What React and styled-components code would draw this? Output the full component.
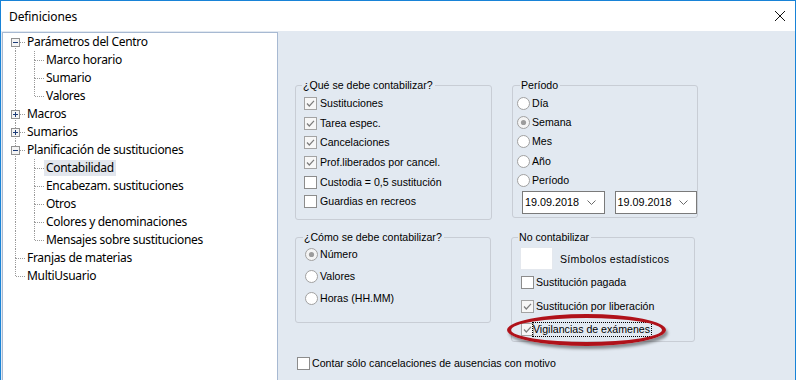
import React from 'react';
import styled, { createGlobalStyle } from 'styled-components';

const GlobalStyle = createGlobalStyle`
  html, body {
    margin: 0;
    padding: 0;
    overflow: hidden;
    background: #ffffff;
  }
`;

const PANEL_BG = '#e2e9f1';

const Window = styled.div`
  height: 380px;
  display: flex;
  flex-direction: column;
  border: 1px solid #1883d7;
  border-bottom: none;
  box-sizing: border-box;
  overflow: hidden;
  font-family: "Noto Sans", "Open Sans", sans-serif;
  color: #000;
`;

const TitleBar = styled.div`
  height: 30px;
  flex: none;
  display: flex;
  align-items: center;
  justify-content: space-between;
  padding: 0 9px 0 8px;
  background: #ffffff;
  font-size: 12px;
  letter-spacing: -0.1px;
`;

const CloseIcon = styled.svg`
  display: block;
  width: 12px;
  height: 12px;
`;

const Body = styled.div`
  flex: 1;
  display: flex;
  background: ${PANEL_BG};
  padding: 1px 0 0 1px;
  min-height: 0;
`;

const TreePanel = styled.div`
  width: 276px;
  flex: none;
  box-sizing: border-box;
  background: #ffffff;
  border: 1px solid #a7b9d2;
  border-bottom: none;
  padding: 0 0 0 3px;
`;

const TreeRow = styled.div`
  display: flex;
  align-items: center;
  height: 18px;
  font-size: 12px;
  letter-spacing: -0.3px;
  white-space: nowrap;
`;

const TreeLabel = styled.span`
  margin-left: ${(p) => (p.$selected ? 0 : 2)}px;
  padding: 0 ${(p) => (p.$selected ? 2 : 0)}px;
  line-height: 16px;
  background: ${(p) => (p.$selected ? '#e2e6ed' : 'transparent')};
`;

const Cell = styled.svg`
  display: block;
  width: 19px;
  height: 18px;
  flex: none;
`;

const RightPanel = styled.div`
  flex: 1;
  display: flex;
  flex-direction: column;
  padding: 53px 0 0 17px;
  font-family: "Liberation Sans", Arial, sans-serif;
  font-size: 10.6px;
`;

const GroupGrid = styled.div`
  display: grid;
  grid-template-columns: 197px 186px;
  column-gap: 20px;
  row-gap: 17px;
  align-items: start;
`;

const Group = styled.div`
  width: ${(p) => p.$w}px;
  height: ${(p) => p.$h}px;
  box-sizing: border-box;
  border: 1px solid #c8cdd5;
  border-radius: 3px;
  padding-left: ${(p) => p.$pad}px;
  margin-left: ${(p) => p.$shift || 0}px;
`;

const GroupTitle = styled.div`
  width: fit-content;
  margin: -7px 0 0 ${(p) => p.$indent}px;
  padding: 0 2px 0 1px;
  line-height: 13px;
  background: ${PANEL_BG};
`;

const List = styled.div`
  display: flex;
  flex-direction: column;
  margin-top: ${(p) => p.$top || 0}px;
  margin-left: ${(p) => p.$left || 0}px;
`;

const OptionRow = styled.div`
  position: relative;
  display: flex;
  align-items: center;
  height: ${(p) => p.$h}px;
  white-space: nowrap;
`;

const OptionLabel = styled.span`
  margin-left: ${(p) => p.$gap}px;
  line-height: 13px;
  border: 1px dotted ${(p) => (p.$focus ? '#000' : 'transparent')};
  padding: 0 1px 0 0;
`;

const BoxIcon = styled.svg`
  display: block;
  width: 13px;
  height: 13px;
  flex: none;
`;

const DateRow = styled.div`
  display: flex;
  gap: 10px;
  margin: 1px 0 0 5px;
`;

const DateField = styled.div`
  width: 83px;
  height: 23px;
  box-sizing: border-box;
  display: flex;
  align-items: center;
  justify-content: space-between;
  padding: 0 8px 0 2px;
  background: #ffffff;
  border: 1px solid #7a7a7a;
  font-size: 10.8px;
`;

const SymbolRow = styled.div`
  display: flex;
  align-items: center;
  margin-top: 3px;
  height: 23px;
`;

const SymbolBox = styled.div`
  width: 33px;
  height: 23px;
  box-sizing: border-box;
  background: #ffffff;
  border: 1px solid #e4e8ee;
`;

const SymbolText = styled.span`
  margin-left: 7px;
  letter-spacing: 0.3px;
`;

const Highlight = styled.div`
  position: absolute;
  left: -14px;
  top: -4px;
  width: 159px;
  height: 32px;
  box-sizing: border-box;
  border: 4px solid #b0121a;
  border-radius: 50%;
  box-shadow: 2px 3px 3px rgba(0, 0, 0, 0.4);
  pointer-events: none;
`;

const BottomRow = styled.div`
  display: flex;
  align-items: center;
  height: 13px;
  margin: 15px 0 0 2px;
  white-space: nowrap;
`;

const TREE = [
  { label: 'Parámetros del Centro', cells: ['first'], box: 'minus' },
  { label: 'Marco horario', cells: ['line', 'tee'] },
  { label: 'Sumario', cells: ['line', 'tee'] },
  { label: 'Valores', cells: ['line', 'last'] },
  { label: 'Macros', cells: ['tee'], box: 'plus' },
  { label: 'Sumarios', cells: ['tee'], box: 'plus' },
  { label: 'Planificación de sustituciones', cells: ['tee'], box: 'minus' },
  { label: 'Contabilidad', cells: ['line', 'tee'], selected: true },
  { label: 'Encabezam. sustituciones', cells: ['line', 'tee'] },
  { label: 'Otros', cells: ['line', 'tee'] },
  { label: 'Colores y denominaciones', cells: ['line', 'tee'] },
  { label: 'Mensajes sobre sustituciones', cells: ['line', 'last'] },
  { label: 'Franjas de materias', cells: ['tee'] },
  { label: 'MultiUsuario', cells: ['last'] },
];

const WHAT = [
  { label: 'Sustituciones', checked: true },
  { label: 'Tarea espec.', checked: true },
  { label: 'Cancelaciones', checked: true },
  { label: 'Prof.liberados por cancel.', checked: true },
  { label: 'Custodia = 0,5 sustitución', checked: false },
  { label: 'Guardias en recreos', checked: false },
];

const PERIOD = [
  { label: 'Día', on: false },
  { label: 'Semana', on: true },
  { label: 'Mes', on: false },
  { label: 'Año', on: false },
  { label: 'Período', on: false },
];

const HOW = [
  { label: 'Número', on: true },
  { label: 'Valores', on: false },
  { label: 'Horas (HH.MM)', on: false },
];

const EXCLUDE = [
  { label: 'Sustitución pagada', checked: false },
  { label: 'Sustitución por liberación', checked: true },
  { label: 'Vigilancias de exámenes', checked: true, focus: true },
];

const DOT = { stroke: '#9a9a9a', strokeWidth: 1, strokeDasharray: '1 1', shapeRendering: 'crispEdges' };

function Connector({ type, box }) {
  const showTop = type === 'line' || type === 'tee' || type === 'last';
  const showBottom = type === 'line' || type === 'tee' || type === 'first';
  const showRight = type !== 'line';
  return (
    <Cell viewBox="0 0 19 18">
      {showTop && <line x1="9.5" y1="0" x2="9.5" y2="9" {...DOT} />}
      {showBottom && <line x1="9.5" y1="9" x2="9.5" y2="18" {...DOT} />}
      {showRight && <line x1="10" y1="9.5" x2="19" y2="9.5" {...DOT} />}
      {box && (
        <g shapeRendering="crispEdges">
          <rect x="5.5" y="5.5" width="8" height="8" fill="#f4f4f4" stroke="#919191" />
          <line x1="7" y1="9.5" x2="12" y2="9.5" stroke="#1d3c78" />
          {box === 'plus' && <line x1="9.5" y1="7" x2="9.5" y2="12" stroke="#1d3c78" />}
        </g>
      )}
    </Cell>
  );
}

function CheckBox({ checked }) {
  return (
    <BoxIcon viewBox="0 0 13 13">
      <rect
        x="0.5"
        y="0.5"
        width="12"
        height="12"
        fill={checked ? '#f7f7f7' : '#ffffff'}
        stroke={checked ? '#a3a3a3' : '#8c8c8c'}
        shapeRendering="crispEdges"
      />
      {checked && (
        <polyline points="3,6.5 5.3,9 10,3.8" fill="none" stroke="#7d7d7d" strokeWidth="1.2" />
      )}
    </BoxIcon>
  );
}

function Radio({ on }) {
  return (
    <BoxIcon viewBox="0 0 13 13">
      <circle cx="6.5" cy="6.5" r="6" fill={on ? '#f4f4f4' : '#ffffff'} stroke="#a0a0a0" />
      {on && <circle cx="6.5" cy="6.5" r="2.6" fill="#9c9c9c" />}
    </BoxIcon>
  );
}

function Chevron() {
  return (
    <svg width="9" height="5" viewBox="0 0 9 5">
      <polyline points="0.5,0.5 4.5,4.5 8.5,0.5" fill="none" stroke="#6a6a6a" strokeWidth="1" />
    </svg>
  );
}

export default function App() {
  return (
    <>
      <GlobalStyle />
      <Window>
        <TitleBar>
          <span>Definiciones</span>
          <CloseIcon viewBox="0 0 12 12">
            <path d="M1 1 L11 11 M11 1 L1 11" stroke="#111" strokeWidth="1" fill="none" />
          </CloseIcon>
        </TitleBar>
        <Body>
          <TreePanel>
            {TREE.map((item) => (
              <TreeRow key={item.label}>
                {item.cells.map((type, i) => (
                  <Connector
                    key={i}
                    type={type}
                    box={i === item.cells.length - 1 ? item.box : undefined}
                  />
                ))}
                <TreeLabel $selected={item.selected}>{item.label}</TreeLabel>
              </TreeRow>
            ))}
          </TreePanel>

          <RightPanel>
            <GroupGrid>
              <Group $w={197} $h={135} $pad={8}>
                <GroupTitle $indent={-2}>¿Qué se debe contabilizar?</GroupTitle>
                <List $top={2}>
                  {WHAT.map((o) => (
                    <OptionRow key={o.label} $h={19.6}>
                      <CheckBox checked={o.checked} />
                      <OptionLabel $gap={2}>{o.label}</OptionLabel>
                    </OptionRow>
                  ))}
                </List>
              </Group>

              <Group $w={186} $h={133} $pad={4}>
                <GroupTitle $indent={3}>Período</GroupTitle>
                <List $top={1.7}>
                  {PERIOD.map((o) => (
                    <OptionRow key={o.label} $h={19.25}>
                      <Radio on={o.on} />
                      <OptionLabel $gap={1}>{o.label}</OptionLabel>
                    </OptionRow>
                  ))}
                </List>
                <DateRow>
                  <DateField>
                    19.09.2018
                    <Chevron />
                  </DateField>
                  <DateField>
                    19.09.2018
                    <Chevron />
                  </DateField>
                </DateRow>
              </Group>

              <Group $w={196} $h={86} $pad={9}>
                <GroupTitle $indent={-2}>¿Cómo se debe contabilizar?</GroupTitle>
                <List>
                  {HOW.map((o) => (
                    <OptionRow key={o.label} $h={21.7}>
                      <Radio on={o.on} />
                      <OptionLabel $gap={1}>{o.label}</OptionLabel>
                    </OptionRow>
                  ))}
                </List>
              </Group>

              <Group $w={184} $h={105} $pad={8} $shift={-1}>
                <GroupTitle $indent={-2}>No contabilizar</GroupTitle>
                <SymbolRow>
                  <SymbolBox />
                  <SymbolText>Símbolos estadísticos</SymbolText>
                </SymbolRow>
                <List $top={1.4} $left={1}>
                  {EXCLUDE.map((o) => (
                    <OptionRow key={o.label} $h={23.2}>
                      <CheckBox checked={o.checked} />
                      <OptionLabel $gap={o.focus ? -2 : 1} $focus={o.focus}>
                        {o.label}
                      </OptionLabel>
                      {o.focus && <Highlight />}
                    </OptionRow>
                  ))}
                </List>
              </Group>
            </GroupGrid>

            <BottomRow>
              <CheckBox checked={false} />
              <OptionLabel $gap={1}>Contar sólo cancelaciones de ausencias con motivo</OptionLabel>
            </BottomRow>
          </RightPanel>
        </Body>
      </Window>
    </>
  );
}
